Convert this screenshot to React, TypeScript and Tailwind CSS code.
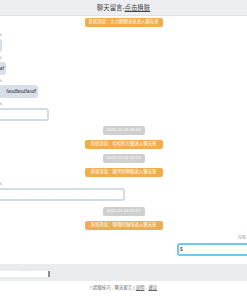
import React from "react"

const font = { fontFamily: '"Liberation Sans", "Noto Sans CJK SC", sans-serif' }

function SysPill({ text, mt }: { text: string; mt: string }) {
  return (
    <div className={`${mt} self-center h-[9px] w-[78px] rounded-[2px] bg-[#f0ad4e] flex items-center justify-center text-[4.4px] leading-none text-white whitespace-nowrap`}>
      {text}
    </div>
  )
}

function TimePill({ text, mt }: { text: string; mt: string }) {
  return (
    <div className={`${mt} self-center h-[9px] w-[42px] rounded-[2px] bg-[#cfcfcf] flex items-center justify-center text-[4.4px] leading-none text-white whitespace-nowrap`}>
      {text}
    </div>
  )
}

function LeftMsg({ name, mt, cls, children }: { name: string; mt: string; cls: string; children?: React.ReactNode }) {
  return (
    <div className={`${mt} flex flex-col items-start`}>
      <div className="h-[4px] text-[4px] leading-[4px] text-[#999]">{name}</div>
      <div className={`mt-[2px] -ml-[3px] h-[13px] rounded-[3px] flex items-center justify-end pr-[2px] text-[5px] italic text-[#333] whitespace-nowrap ${cls}`}>
        {children}
      </div>
    </div>
  )
}

export default function App() {
  return (
    <div className="h-[296px] w-[247px] flex flex-col bg-white overflow-hidden" style={font}>
      <header className="h-[16px] shrink-0 bg-[#eceef1] border-b border-[#dfe3e8] flex items-center justify-center text-[6.4px] text-[#444]">
        聊天留言-<span className="underline">点击换肤</span>
      </header>

      <main className="flex-1 flex flex-col overflow-hidden">
        <SysPill mt="mt-[2px]" text="系统消息：大力鹏鹏来来进入聊天室" />

        <LeftMsg mt="mt-[6px]" name="k" cls="w-[5px] bg-[#d8dfe8]" />
        <LeftMsg mt="mt-[4px]" name="k" cls="w-[9px] bg-[#d8dfe8]">
          af
        </LeftMsg>
        <LeftMsg mt="mt-[4px]" name="k" cls="w-[41px] bg-[#d8dfe8]">
          fasdfasdfasdf
        </LeftMsg>
        <LeftMsg mt="mt-[4px]" name="k" cls="w-[52px] bg-white border-2 border-[#d3dbe5]" />

        <TimePill mt="mt-[5px]" text="2020-11-04 09:33" />
        <SysPill mt="mt-[5px]" text="系统消息：哈哈的大傻进入聊天室" />
        <TimePill mt="mt-[5px]" text="2020-11-04 10:14" />
        <SysPill mt="mt-[5px]" text="系统消息：搬代码啊猪进入聊天室" />

        <LeftMsg mt="mt-[5px]" name="k" cls="w-[128px] bg-white border-2 border-[#d3dbe5] !justify-start">
          <span className="ml-[20px] not-italic text-[3px] tracking-[10px] text-[#aaa]">.. . . .</span>
        </LeftMsg>

        <TimePill mt="mt-[6px]" text="2020-11-04 11:07" />
        <SysPill mt="mt-[5px]" text="系统消息：嘻嘻的咖啡进入聊天室" />

        <div className="mt-[6px] flex flex-col items-end">
          <div className="h-[4px] pr-[1px] text-[4px] leading-[4px] text-[#999]">拉啦</div>
          <div className="mt-[3px] -mr-[10px] w-[80px] h-[13px] rounded-[3px] border-2 border-[#74c6f3] bg-white flex items-center pl-[1px] text-[5px] text-[#333]">
            $
          </div>
        </div>
      </main>

      <div className="h-[17px] shrink-0 bg-[#e9ecef] flex items-center">
        <div className="relative -ml-[4px] w-[54px] h-[6px] mt-[2px] bg-white border-r-2 border-[#8a8f96]">
          <span className="absolute left-[25px] -top-[2px] text-[3px] tracking-[2px] text-[#999]">..</span>
        </div>
      </div>

      <footer className="h-[15px] shrink-0 flex items-center justify-center text-[4.4px] text-[#666]">
        <span>
          ©超级技巧 - 聊天留言 | <span className="underline">说明</span> - <span className="underline">建议</span>
        </span>
      </footer>
    </div>
  )
}
